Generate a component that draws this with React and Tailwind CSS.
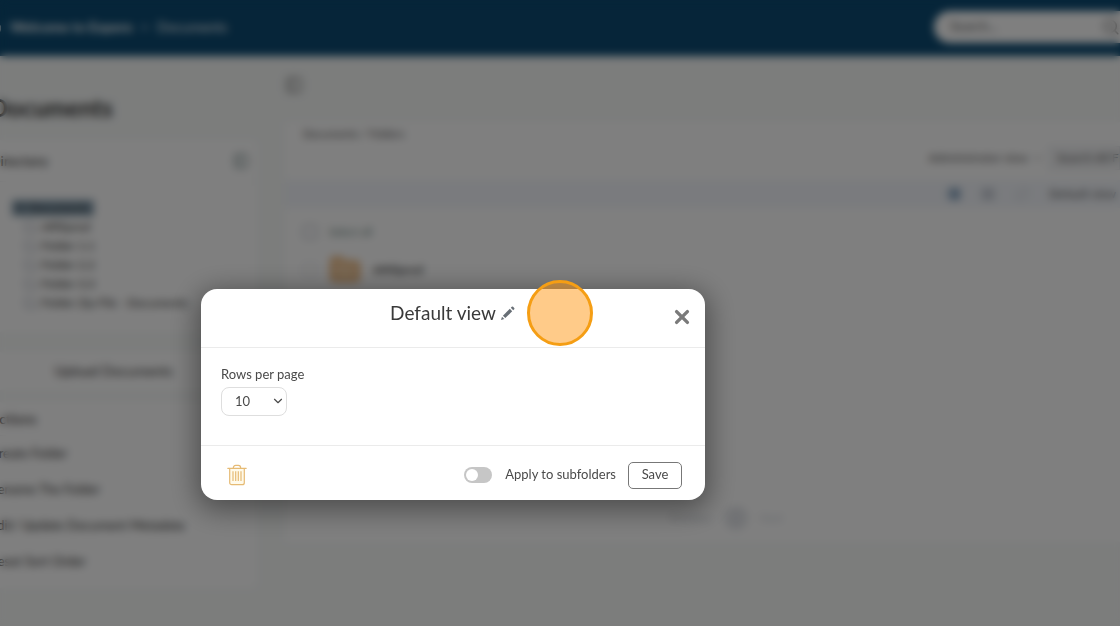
import { Search, Home, Folder, FolderOpen, List, LayoutGrid, RefreshCw, ChevronDown, PanelLeft } from 'lucide-react';

const treeItems = ['Affiliprod', 'Folder 1.1', 'Folder 2.2', 'Folder 3.3', 'Folder Zip File - Documents'];

const actions = ['Create Folder', 'Rename The Folder', 'Edit/ Update Document Metadata', 'Reset Sort Order'];

function PencilIcon() {
    return (
        <svg viewBox="0 0 16 16" className="w-4 h-4 fill-[#676e75]" aria-hidden="true">
            <path d="M1 15l1-3.300 2.300 2.300z" />
            <path d="M2.900 10.700l6.900-6.900 2.400 2.400-6.900 6.900z" />
            <path d="M10.800 2.800l1-1a.9.9 0 0 1 1.300 0l1.100 1.100a.9.9 0 0 1 0 1.300l-1 1z" />
        </svg>
    );
}

function TrashIcon() {
    return (
        <svg viewBox="0 0 20 22" className="w-5 h-[22px]" fill="none" stroke="#e6bb75" strokeWidth="1.2" aria-hidden="true">
            <path d="M2.700 4.500v14.200a2 2 0 0 0 2 2h10.600a2 2 0 0 0 2-2V4.500" fill="#fffaea" />
            <path d="M.8 4.300h18.400" strokeLinecap="round" />
            <path d="M6.300 4.200c0-1.800.9-2.800 2.400-2.800h2.600c1.500 0 2.400 1 2.400 2.800" />
            <path d="M6 7.300v9.700M8.700 7.300v9.700M11.300 7.300v9.700M14 7.300v9.700" />
        </svg>
    );
}

function Sidebar() {
    return (
        <aside className="w-[287px] shrink-0 pt-9 text-[13px] text-[#333]">
            <h1 className="px-5 mb-4 text-2xl leading-8 font-bold">Documents</h1>

            <section className="bg-white rounded-md pb-5">
                <div className="flex items-center justify-between h-[42px] pl-5 pr-2 border-b border-gray-100">
                    <h2 className="text-sm font-medium">Directory</h2>
                    <PanelLeft className="w-4 h-4 text-[#6d8484]" />
                </div>
                <ul className="pt-4 pl-[42px] whitespace-nowrap text-xs">
                    <li className="flex items-center h-[19px]">
                        <span className="flex items-center w-[82px] h-4 px-1 gap-1 bg-[#8099ab] text-[#333]">
                            <FolderOpen className="w-3 h-3" />
                            Documents
                        </span>
                    </li>
                    {treeItems.map((item) => (
                        <li key={item} className="flex items-center h-[19px] gap-1 pl-3">
                            <Folder className="w-[14px] h-[14px] text-gray-400" />
                            {item}
                        </li>
                    ))}
                </ul>
            </section>

            <button className="mt-5 w-full h-[38px] bg-white rounded-md text-sm">Upload Documents</button>

            <section className="mt-3 pb-2 bg-white rounded-md">
                <h2 className="flex items-center h-[34px] px-5 border-b border-gray-100 text-sm font-medium">Actions</h2>
                <ul>
                    {actions.map((action) => (
                        <li key={action} className="flex items-center h-9 px-5">
                            <button>{action}</button>
                        </li>
                    ))}
                </ul>
            </section>
        </aside>
    );
}

function DocumentList() {
    return (
        <main className="flex-1 min-w-0 pt-5 pl-7 text-[11px] text-[#555]">
            <PanelLeft className="w-[18px] h-[18px] text-[#777]" />
            <div className="flex flex-col mt-7 h-[420px] bg-white">
                <nav className="px-[18px] h-6 leading-6">Documents / Folders</nav>
                <div className="flex items-start justify-end h-[34px]">
                    <button className="flex items-center h-6 gap-1 pr-1 text-xs">
                        Administrator view <ChevronDown className="w-3 h-3" />
                    </button>
                    <button className="w-[72px] h-6 pl-2 text-left text-xs bg-gray-100 border border-gray-200 whitespace-nowrap overflow-hidden">
                        Search All Files
                    </button>
                </div>
                <div className="flex items-center justify-end h-7 gap-5 pr-1 bg-[#f4f7fc]">
                    <List className="w-[14px] h-[14px] text-[#3d6b97]" strokeWidth={4} />
                    <LayoutGrid className="w-[14px] h-[14px] text-gray-400" />
                    <RefreshCw className="w-[14px] h-[14px] text-gray-300" />
                    <span className="text-xs">Default view</span>
                </div>
                <label className="flex items-center mt-1 h-10 px-[18px] gap-3 text-[#6a8580]">
                    <input type="checkbox" className="w-[14px] h-[14px] appearance-none border border-gray-400 rounded-xs" />
                    Select all
                </label>
                <label className="flex items-center h-9 px-[18px] gap-3 text-xs font-bold">
                    <input type="checkbox" className="w-[14px] h-[14px] appearance-none border border-gray-300 rounded-xs" />
                    <Folder className="w-8 h-8 text-[#e5a056] fill-[#f3cfa5]" />
                    Affiliprod
                </label>
                <div className="flex items-center justify-center mt-auto mb-3 pl-12 gap-3 text-gray-300">
                    <span>Previous</span>
                    <span className="w-6 h-6 leading-6 text-center rounded-full bg-gray-200">1</span>
                    <span>Next</span>
                </div>
            </div>
        </main>
    );
}

function ViewDialog() {
    return (
        <div role="dialog" aria-modal="true" aria-labelledby="view-title" className="relative w-[504px] bg-white rounded-2xl shadow-[0_6px_28px_4px_rgba(0,0,0,0.4)] text-[#4a4a4a]">
            <div className="relative flex justify-center h-[59px] pt-2 border-b border-[#ebebeb]">
                <div className="flex items-center h-8 gap-1">
                    <h2 id="view-title" className="text-[19px] text-[#3a3a3a]">Default view</h2>
                    <button aria-label="Rename view"><PencilIcon /></button>
                </div>
                <button aria-label="Close" className="absolute right-[15px] top-5">
                    <svg viewBox="0 0 16 16" className="w-4 h-4" stroke="#7a7a7a" strokeWidth="3.4" strokeLinecap="round">
                        <path d="M2.600 2.600l10.800 10.800M13.400 2.600L2.600 13.400" />
                    </svg>
                </button>
            </div>

            <div className="h-[98px] px-5 pt-4 border-b border-[#ebebeb]">
                <label htmlFor="rows" className="block mb-[3px] h-5 leading-5 text-[13px]">Rows per page</label>
                <div className="relative w-[66px]">
                    <select id="rows" defaultValue="10" className="block w-full h-[29px] pl-[13px] appearance-none rounded-lg border border-[#dedede] bg-white text-[13px]">
                        <option>10</option>
                        <option>25</option>
                        <option>50</option>
                    </select>
                    <ChevronDown className="absolute right-[2px] top-[7px] w-[14px] h-[14px] pointer-events-none" strokeWidth={2} />
                </div>
            </div>

            <div className="flex items-center h-[54px] pt-1 pl-[26px] pr-[23px] text-[13px]">
                <button aria-label="Delete view"><TrashIcon /></button>
                <label className="flex items-center ml-auto mr-3 gap-[13px]">
                    <input
                        type="checkbox"
                        role="switch"
                        className="appearance-none w-7 h-4 rounded-full bg-[#c6c6c6] before:block before:w-3 before:h-3 before:m-[2px] before:rounded-full before:bg-white checked:before:ml-[14px]"
                    />
                    Apply to subfolders
                </label>
                <button className="w-[54px] h-[27px] rounded-[5px] border border-[#777]">Save</button>
            </div>

            {/* click marker */}
            <div className="absolute left-[326px] -top-[9px] w-[66px] h-[66px] rounded-full border-3 border-[#f59e14] bg-[#ff9714]/50 pointer-events-none" />
        </div>
    );
}

export default function App() {
    return (
        <div className="relative min-h-screen overflow-hidden bg-[#f8faf9] font-['Lato',sans-serif]">
            <div inert>
                <header className="flex items-center justify-between h-14 pb-[3px] bg-[#0c4a72] text-white">
                    <nav className="flex items-center gap-2 -ml-[10px] text-sm leading-4">
                        <Home className="w-3 h-3" />
                        <span className="font-bold">Welcome to Expero</span>
                        <span>&gt;</span>
                        <span>Documents</span>
                    </nav>
                    <div className="flex items-center w-[206px] h-8 -mr-5 pl-4 pr-5 rounded-full bg-white text-[#666]">
                        <input aria-label="Search" placeholder="Search..." className="flex-1 min-w-0 text-[13px] placeholder:text-[#666]" />
                        <Search className="w-[18px] h-[18px]" />
                    </div>
                </header>
                <div className="flex -ml-[30px]">
                    <Sidebar />
                    <DocumentList />
                </div>
            </div>

            <div className="absolute inset-0 pt-[289px] pl-[201px] bg-black/50 backdrop-blur-[4px]">
                <ViewDialog />
            </div>
        </div>
    );
}
